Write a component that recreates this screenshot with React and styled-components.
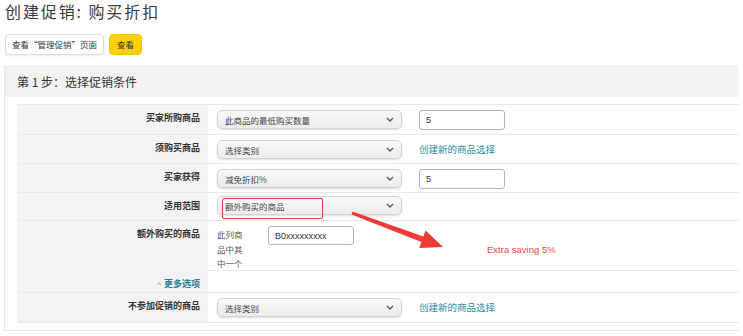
import React from "react";
import styled, { createGlobalStyle } from "styled-components";

const Global = createGlobalStyle`
  html, body { margin: 0; padding: 0; background: #fff; }
  body { font-family: "Noto Sans CJK SC", "Noto Sans", "Liberation Sans", sans-serif; color: #333; }
  * { box-sizing: border-box; }
`;

const Page = styled.div`
  position: relative;
  width: 743px;
  height: 336px;
  overflow: hidden;
`;

const Title = styled.h1`
  margin: 0;
  padding-left: 5px;
  font-size: 16px;
  line-height: 22px;
  font-weight: 400;
  letter-spacing: 1.9px;
  color: #3a3a3a;
`;

const Toolbar = styled.div`
  display: flex;
  gap: 5px;
  padding-left: 5px;
  margin-top: 12px;
`;

const Button = styled.button`
  height: 21px;
  padding: 0 ${(p) => (p.$primary ? 7 : 6)}px;
  font-family: inherit;
  font-size: 8.5px;
  line-height: 19px;
  color: #333;
  border-radius: 4px;
  cursor: pointer;
  border: 1px solid ${(p) => (p.$primary ? "#f2c300" : "#dcdcdc")};
  background: ${(p) => (p.$primary ? "#fdd000" : "#fff")};
  box-shadow: ${(p) => (p.$primary ? "none" : "0 1px 2px rgba(0,0,0,0.08)")};
`;

const Panel = styled.section`
  margin: 10px 0 0 4px;
  width: 735px;
  border: 1px solid #e6e6e6;
  border-top: none;
  border-right: none;
  padding-bottom: 7px;
`;

const PanelHeader = styled.div`
  height: 32px;
  background: #f2f2f2;
  padding-left: 12px;
  display: flex;
  align-items: center;
  font-size: 12px;
  color: #333;
`;

const Table = styled.div`
  margin: 7px 0 0 12px;
  border-bottom: 1px solid #e8e8e8;
`;

const Row = styled.div`
  display: grid;
  grid-template-columns: 191px 1fr;
  height: ${(p) => p.$h}px;
  border-top: 1px solid #e8e8e8;
`;

const Label = styled.div`
  background: #f3f3f3;
  text-align: right;
  padding: 6px 8px 0 0;
  font-size: 9px;
  line-height: 14px;
  font-weight: 700;
  color: ${(p) => (p.$link ? "#1b8291" : "#333")};
`;

const Caret = styled.span`
  color: #8a8a8a;
  font-family: "Liberation Sans", sans-serif;
  font-size: 8px;
  font-weight: 400;
  margin-right: 3px;
`;

const Value = styled.div`
  display: flex;
  align-items: flex-start;
  padding: ${(p) => p.$pt ?? 5}px 0 0 9px;
  gap: ${(p) => p.$gap ?? 17}px;
`;

const SelectBox = styled.div`
  position: relative;
  width: 185px;
  height: 19px;
  border: 1px solid #d2d2d2;
  border-radius: 5px;
  background: linear-gradient(#f8f8f8, #ececec);
  box-shadow: 0 1px 2px rgba(0, 0, 0, 0.14);
  display: flex;
  align-items: center;
  justify-content: space-between;
  padding: 0 7px 0 7px;
  font-size: 8.5px;
  color: #444;
`;

const Highlight = styled.span`
  position: absolute;
  left: 4px;
  top: 1px;
  width: 101px;
  height: 21px;
  border: 1.5px solid #e23a3a;
  border-radius: 2px;
`;

const TextInput = styled.div`
  width: ${(p) => p.$w || 86}px;
  height: ${(p) => p.$h || 20}px;
  border: 1px solid #b3b3b3;
  border-radius: 3px;
  background: #fff;
  padding-left: 6px;
  display: flex;
  align-items: center;
  font-family: "Liberation Sans", sans-serif;
  font-size: 9px;
  color: #333;
`;

const Link = styled.a`
  font-size: 9.5px;
  line-height: 19px;
  color: #2a8d9c;
  text-decoration: none;
`;

const Note = styled.div`
  width: 30px;
  font-size: 8.5px;
  line-height: 14.5px;
  color: #555;
  margin-top: 1px;
`;

const Annotation = styled.div`
  align-self: center;
  margin-left: 112px;
  margin-top: 2px;
  font-family: "Liberation Sans", sans-serif;
  font-size: 9.5px;
  color: #f04848;
`;

const Overlay = styled.svg`
  position: absolute;
  left: 0;
  top: 0;
  pointer-events: none;
`;

const Chevron = () => (
  <svg width="8" height="5" viewBox="0 0 8 5">
    <path d="M1 1l3 3 3-3" fill="none" stroke="#555" strokeWidth="1.3" />
  </svg>
);

const Select = ({ children, highlight }) => (
  <SelectBox>
    {highlight && <Highlight />}
    <span>{children}</span>
    <Chevron />
  </SelectBox>
);

export default function App() {
  return (
    <Page>
      <Global />
      <Title>创建促销: 购买折扣</Title>
      <Toolbar>
        <Button>查看“管理促销”页面</Button>
        <Button $primary>查看</Button>
      </Toolbar>
      <Panel>
        <PanelHeader>第 1 步：选择促销条件</PanelHeader>
        <Table>
          <Row $h={30}>
            <Label>买家所购商品</Label>
            <Value>
              <Select>此商品的最低购买数量</Select>
              <TextInput>5</TextInput>
            </Value>
          </Row>
          <Row $h={29}>
            <Label>须购买商品</Label>
            <Value>
              <Select>选择类别</Select>
              <Link>创建新的商品选择</Link>
            </Value>
          </Row>
          <Row $h={29}>
            <Label>买家获得</Label>
            <Value>
              <Select>减免折扣%</Select>
              <TextInput>5</TextInput>
            </Value>
          </Row>
          <Row $h={28}>
            <Label>适用范围</Label>
            <Value $pt={3}>
              <Select highlight>额外购买的商品</Select>
            </Value>
          </Row>
          <Row $h={50}>
            <Label>额外购买的商品</Label>
            <Value $pt={5} $gap={21}>
              <Note>此列商品中其中一个</Note>
              <TextInput $w={86} $h={19}>B0xxxxxxxxx</TextInput>
              <Annotation>Extra saving 5%</Annotation>
            </Value>
          </Row>
          <Row $h={22}>
            <Label $link>
              <Caret>^</Caret>更多选项
            </Label>
            <Value />
          </Row>
          <Row $h={30}>
            <Label>不参加促销的商品</Label>
            <Value>
              <Select>选择类别</Select>
              <Link>创建新的商品选择</Link>
            </Value>
          </Row>
        </Table>
      </Panel>
      <Overlay width="743" height="336" viewBox="0 0 743 336">
        <polygon
          points="352.5,211.5 423.4,236.5 425.5,230.5 443,247 419.3,248 421.4,242.1 351.5,214.5"
          fill="#ee3b36"
        />
      </Overlay>
    </Page>
  );
}
